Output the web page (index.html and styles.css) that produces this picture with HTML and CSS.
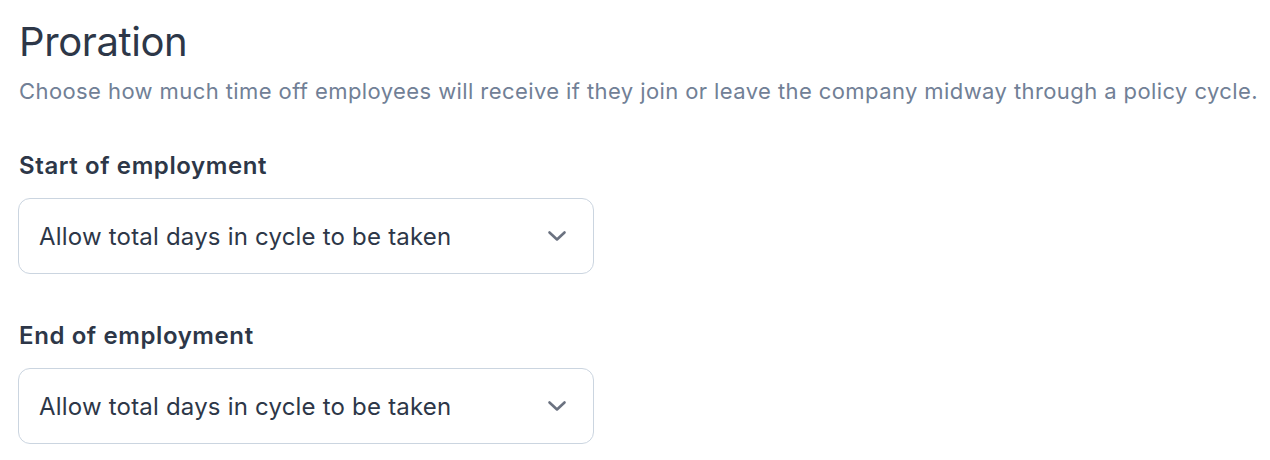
FILE: index.html
```html
<!DOCTYPE html>
<html>
<head>
<meta charset="utf-8">
<link rel="stylesheet" href="styles.css">
</head>
<body>
<main class="page">
  <h1 class="title">Proration</h1>
  <p class="desc">Choose how much time off employees will receive if they join or leave the company midway through a policy cycle.</p>
  <section class="field">
    <label class="label">Start of employment</label>
    <div class="select">
      <span class="select-text">Allow total days in cycle to be taken</span>
      <svg class="chev" width="20" height="12" viewBox="0 0 20 12"><path d="M2.5 2.5 L10 9.5 L17.5 2.5" fill="none" stroke="#6b7280" stroke-width="2.6" stroke-linecap="round" stroke-linejoin="round"/></svg>
    </div>
  </section>
  <section class="field">
    <label class="label">End of employment</label>
    <div class="select">
      <span class="select-text">Allow total days in cycle to be taken</span>
      <svg class="chev" width="20" height="12" viewBox="0 0 20 12"><path d="M2.5 2.5 L10 9.5 L17.5 2.5" fill="none" stroke="#6b7280" stroke-width="2.6" stroke-linecap="round" stroke-linejoin="round"/></svg>
    </div>
  </section>
</main>
</body>
</html>
```
FILE: styles.css
```css
html, body { margin: 0; padding: 0; background: #fff; }
body { font-family: Inter, "Noto Sans", sans-serif; color: #2d3748; }
.page { padding: 14px 0 0 19px; }
.title { margin: 0; font-size: 40px; font-weight: 400; line-height: 56px; color: #2d3748; letter-spacing: -0.4px; }
.desc { margin: 6px 0 0; font-size: 22px; line-height: 30px; color: #718096; letter-spacing: 0.41px; }
.field { margin-top: 45px; }
.field + .field { margin-top: 47px; }
.label { display: block; font-size: 24px; font-weight: 600; line-height: 30px; color: #2d3748; letter-spacing: 0.6px; }
.select { margin-top: 17px; margin-left: -1px; width: 528px; height: 74px; border: 1px solid #cbd5e0; border-radius: 12px; display: flex; align-items: center; justify-content: space-between; padding: 0 26px 0 20px; }
.select-text { font-size: 24px; color: #2d3748; letter-spacing: 0.2px; }
.chev { display: block; }
```
